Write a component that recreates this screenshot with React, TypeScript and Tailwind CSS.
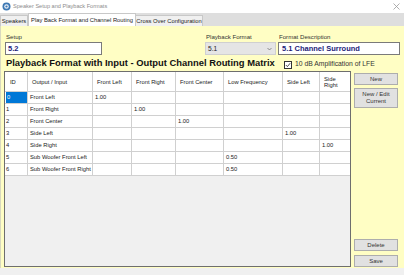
import React from "react";

const cols = [23, 65, 39, 44, 48, 59, 37, 30];
const headers = ["ID", "Output / Input", "Front Left", "Front Right", "Front Center", "Low Frequency", "Side Left", "Side\nRight"];
const rows: string[][] = [
  ["0", "Front Left", "1.00", "", "", "", "", ""],
  ["1", "Front Right", "", "1.00", "", "", "", ""],
  ["2", "Front Center", "", "", "1.00", "", "", ""],
  ["3", "Side Left", "", "", "", "", "1.00", ""],
  ["4", "Side Right", "", "", "", "", "", "1.00"],
  ["5", "Sub Woofer Front Left", "", "", "", "0.50", "", ""],
  ["6", "Sub Woofer Front Right", "", "", "", "0.50", "", ""],
];

function Btn({ label, h }: { label: React.ReactNode; h: string }) {
  return (
    <div className={`w-[44px] ${h} bg-[#e1e1e1] border border-[#adadad] flex items-center justify-center text-center leading-[7px] text-[6px] text-[#333]`}>
      {label}
    </div>
  );
}

export default function App() {
  return (
    <div className="w-[404px] h-[275px] overflow-hidden flex flex-col bg-[#f0f0f0] text-[#222]" style={{ fontFamily: '"Liberation Sans", Arial, sans-serif' }}>
      {/* title bar */}
      <div className="h-[13px] bg-white flex items-center relative">
        <svg width="9" height="9" viewBox="0 0 9 9" className="ml-[2px]">
          <circle cx="4.5" cy="4.5" r="4" fill="#3c78b4" />
          <circle cx="4.5" cy="4.5" r="2.3" fill="#e8eef6" />
          <circle cx="4.5" cy="4.5" r="1.1" fill="#3c78b4" />
        </svg>
        <span className="ml-[2px] text-[5.6px] text-[#8c8c8c]">Speaker Setup and Playback Formats</span>
        <svg width="7" height="7" viewBox="0 0 7 7" className="absolute right-[4px] top-[3px]">
          <path d="M0.5 0.5 L6.5 6.5 M6.5 0.5 L0.5 6.5" stroke="#9a9a9a" strokeWidth="0.8" />
        </svg>
      </div>
      {/* tab strip */}
      <div className="h-[13px] bg-[#dedede] flex items-end text-[5.8px] text-[#222]">
        <div className="h-[11px] w-[28px] bg-[#f0f0f0] border border-b-0 border-[#c8c8c8] flex items-center justify-center">Speakers</div>
        <div className="h-[13px] w-[108px] bg-white border border-b-0 border-[#c8c8c8] flex items-center justify-center">Play Back Format and Channel Routing</div>
        <div className="h-[11px] w-[67px] bg-[#f0f0f0] border border-b-0 border-l-0 border-[#c8c8c8] flex items-center justify-center">Cross Over Configuration</div>
      </div>
      {/* panel */}
      <div className="h-[242px] bg-[#fffec4] border-l border-[#d8d8c0] flex flex-col pl-[3px]">
        {/* fields */}
        <div className="flex mt-[7px] text-[6.1px] text-[#333]">
          <div className="ml-[1px] w-[97px] flex flex-col">
            <span className="h-[9px] leading-[8px] ml-[1px]">Setup</span>
            <div className="h-[13px] bg-white border border-[#7a7a7a] flex items-center pl-[2px] text-[7.5px] font-bold text-[#1c1c78]">5.2</div>
          </div>
          <div className="ml-[103px] w-[71px] flex flex-col">
            <span className="h-[9px] leading-[8px] ml-[1px]">Playback Format</span>
            <div className="h-[13px] bg-[#e5e5e5] border border-[#d0d0d0] flex items-center pl-[2px] text-[6.6px] text-[#222] relative">
              5.1
              <svg width="5" height="4" viewBox="0 0 5 4" className="absolute right-[3px] top-[4px]">
                <path d="M0.5 1 L2.5 3 L4.5 1" stroke="#666" strokeWidth="0.7" fill="none" />
              </svg>
            </div>
          </div>
          <div className="ml-[2px] w-[122px] flex flex-col">
            <span className="h-[9px] leading-[8px] ml-[1px]">Format Description</span>
            <div className="h-[13px] bg-white border border-[#7a7a7a] flex items-center pl-[3px] text-[7.5px] font-bold text-[#1c1c78]">5.1 Channel Surround</div>
          </div>
        </div>
        {/* heading row */}
        <div className="h-[16px] flex items-center">
          <span className="ml-[2px] w-[278px] text-[9.4px] font-bold text-[#111] leading-[10px] whitespace-nowrap">Playback Format with Input - Output Channel Routing Matrix</span>
          <div className="mt-[3px] flex items-center">
            <div className="w-[8px] h-[8px] border border-[#333] bg-white flex items-center justify-center">
              <svg width="6" height="6" viewBox="0 0 6 6">
                <path d="M0.8 3 L2.4 4.6 L5.2 1.2" stroke="#222" strokeWidth="0.8" fill="none" />
              </svg>
            </div>
            <span className="ml-[3px] text-[6.8px] text-[#333]">10 dB Amplification of LFE</span>
          </div>
        </div>
        {/* main */}
        <div className="flex flex-1">
          <div className="w-[347px] h-[196px] border border-[#6e6e6e] bg-[#f0f0f0] flex flex-col text-[5.8px] text-[#222]">
            <div className="flex bg-white">
              {headers.map((h, i) => (
                <div
                  key={i}
                  style={{ width: cols[i] }}
                  className={`h-[20px] border-b border-[#d0d0d0] ${i < 7 ? "border-r" : ""} flex items-center whitespace-pre-line leading-[6px] ${i === 0 ? "pl-[5px]" : "pl-[4px]"}`}
                >
                  {h}
                </div>
              ))}
            </div>
            {rows.map((r, ri) => (
              <div key={ri} className="flex bg-white">
                {r.map((c, ci) => (
                  <div
                    key={ci}
                    style={{ width: cols[ci] }}
                    className={`h-[12px] border-b border-[#d0d0d0] ${ci < 7 ? "border-r" : ""} flex items-center whitespace-nowrap ${ci === 0 ? "pl-[1px]" : "pl-[2px]"}`}
                  >
                    {ri === 0 && ci === 0 ? (
                      <div className="w-full h-full bg-[#0078d7] text-white flex items-center pl-[1px]">{c}</div>
                    ) : (
                      c
                    )}
                  </div>
                ))}
              </div>
            ))}
          </div>
          <div className="ml-[3px] flex flex-col">
            <div className="mt-[2px]"><Btn label="New" h="h-[12px]" /></div>
            <div className="mt-[3px]"><Btn label={<span>New / Edit<br />Current</span>} h="h-[20px]" /></div>
            <div className="mt-[131px]"><Btn label="Delete" h="h-[12px]" /></div>
            <div className="mt-[4px]"><Btn label="Save" h="h-[12px]" /></div>
          </div>
        </div>
      </div>
      <div className="flex-1 bg-[#f0f0f0]" />
    </div>
  );
}
